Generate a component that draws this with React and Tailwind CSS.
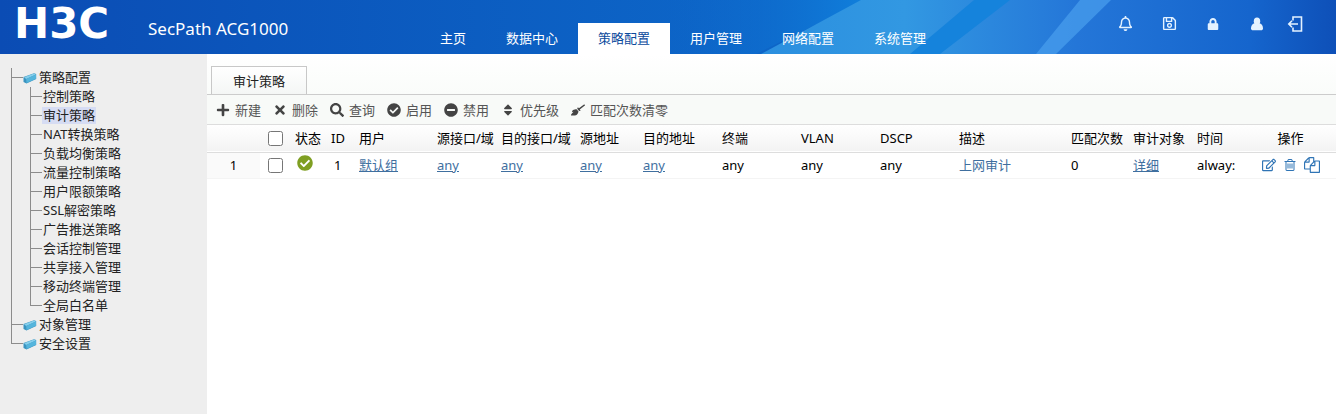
import React, { useState } from 'react';
import {
    FaPlus,
    FaTimes,
    FaSearch,
    FaCheckCircle,
    FaMinusCircle,
    FaSort,
    FaBroom,
    FaRegBell,
    FaRegSave,
    FaLock,
    FaRegEdit,
} from 'react-icons/fa';

const NAV = ['主页', '数据中心', '策略配置', '用户管理', '网络配置', '系统管理'];

const POLICY_ITEMS = [
    '控制策略',
    '审计策略',
    'NAT转换策略',
    '负载均衡策略',
    '流量控制策略',
    '用户限额策略',
    'SSL解密策略',
    '广告推送策略',
    '会话控制管理',
    '共享接入管理',
    '移动终端管理',
    '全局白名单',
];

const ACTIONS = [
    { label: '新建', icon: FaPlus },
    { label: '删除', icon: FaTimes },
    { label: '查询', icon: FaSearch },
    { label: '启用', icon: FaCheckCircle },
    { label: '禁用', icon: FaMinusCircle },
    { label: '优先级', icon: FaSort },
    { label: '匹配次数清零', icon: FaBroom },
];

const LINK = 'text-[#3f6f9f] underline';

const COLUMNS = [
    { key: 'user', label: '用户', width: 'w-[78px]', link: LINK },
    { key: 'srcIf', label: '源接口/域', width: 'w-[64px]', link: LINK },
    { key: 'dstIf', label: '目的接口/域', width: 'w-[79px]', link: LINK },
    { key: 'src', label: '源地址', width: 'w-[63px]', link: LINK },
    { key: 'dst', label: '目的地址', width: 'w-[79px]', link: LINK },
    { key: 'terminal', label: '终端', width: 'w-[79px]' },
    { key: 'vlan', label: 'VLAN', width: 'w-[79px]' },
    { key: 'dscp', label: 'DSCP', width: 'w-[79px]' },
    { key: 'desc', label: '描述', width: 'w-[112px]', link: 'text-[#3f6f9f]' },
    { key: 'hits', label: '匹配次数', width: 'w-[62px]' },
    { key: 'audit', label: '审计对象', width: 'w-[64px]', link: LINK },
    { key: 'time', label: '时间', width: 'w-[43px]' },
];

const POLICIES = [
    {
        id: 1,
        user: '默认组',
        srcIf: 'any',
        dstIf: 'any',
        src: 'any',
        dst: 'any',
        terminal: 'any',
        vlan: 'any',
        dscp: 'any',
        desc: '上网审计',
        hits: 0,
        audit: '详细',
        time: 'alway:',
    },
];

const UserIcon = () => (
    <svg viewBox="0 0 14 14" className="h-[14px] w-[14px]" fill="currentColor">
        <ellipse cx="7" cy="4.2" rx="3.2" ry="3.7" />
        <path d="M4.4 6.2C2 7 1 9 1 11.2 1 12.6 1.8 13.2 3 13.2h8c1.2 0 2-.6 2-2C13 9 12 7 9.6 6.2z" />
    </svg>
);

const LogoutIcon = () => (
    <svg viewBox="0 0 16 16" className="h-[16px] w-[16px]" fill="none" stroke="currentColor" strokeWidth="1.6">
        <path d="M6 4.5V1h8.5v14H6v-3.5" />
        <path d="M11 8H2M5 4.8L1.8 8 5 11.2" />
    </svg>
);

const TrashIcon = () => (
    <svg viewBox="0 0 1792 1792" className="h-4 w-[14px]" fill="currentColor">
        <path d="M704 736v576q0 14-9 23t-23 9h-64q-14 0-23-9t-9-23v-576q0-14 9-23t23-9h64q14 0 23 9t9 23zm256 0v576q0 14-9 23t-23 9h-64q-14 0-23-9t-9-23v-576q0-14 9-23t23-9h64q14 0 23 9t9 23zm256 0v576q0 14-9 23t-23 9h-64q-14 0-23-9t-9-23v-576q0-14 9-23t23-9h64q14 0 23 9t9 23zm128 724v-948h-896v948q0 22 7 40.500t14.500 27 10.500 8.500h832q3 0 10.500-8.500t14.500-27 7-40.500zm-672-1076h448l-48-117q-7-9-17-11h-317q-10 2-17 11zm928 32v64q0 14-9 23t-23 9h-96v948q0 83-47 143.500t-113 60.500h-832q-66 0-113-58.500t-47-141.500v-952h-96q-14 0-23-9t-9-23v-64q0-14 9-23t23-9h309l70-167q15-37 54-63t79-26h320q40 0 79 26t54 63l70 167h309q14 0 23 9t9 23z" />
    </svg>
);

const CopyIcon = () => (
    <svg viewBox="0 0 1792 1792" className="h-4 w-4" fill="currentColor">
        <path d="M1696 384q40 0 68 28t28 68v1216q0 40-28 68t-68 28h-960q-40 0-68-28t-28-68v-288h-544q-40 0-68-28t-28-68v-672q0-40 20-88t48-76l408-408q28-28 76-48t88-20h416q40 0 68 28t28 68v328q68-40 128-40h416zm-544 213l-299 299h299v-299zm-640-384l-299 299h299v-299zm196 647l316-316v-416h-384v416q0 40-28 68t-68 28h-416v640h512v-256q0-40 20-88t48-76zm956 804v-1152h-384v416q0 40-28 68t-68 28h-416v640h896z" />
    </svg>
);

// tilted book, spine at the bottom left
const BookIcon = () => (
    <svg viewBox="0 0 14 12" className="h-[12px] w-[14px]">
        <path d="M0.5 5L11 1.2 13.2 2v5L3.5 11.5 0.5 10z" fill="#3a93bf" />
        <path d="M1 5.2L11 1.5 13 2.5 3.2 7z" fill="#86cfec" />
        <path d="M3.2 7L13 2.5v4.2L3.5 11z" fill="#55b5dc" />
    </svg>
);

const HEADER_TOOLS = [
    { label: '消息', icon: <FaRegBell size={15} />, width: 'w-11' },
    { label: '保存', icon: <FaRegSave size={15} />, width: 'w-11' },
    { label: '锁定', icon: <FaLock size={12} />, width: 'w-11' },
    { label: '用户', icon: <UserIcon />, width: 'w-11' },
    { label: '退出', icon: <LogoutIcon />, width: 'w-8' },
];

const Branch = ({ last, width }) => (
    <span className={`flex h-full flex-col ${width}`}>
        <span className="h-[10px] border-b border-l border-[#8c8c8c]" />
        <span className={`flex-1 border-l ${last ? 'border-transparent' : 'border-[#8c8c8c]'}`} />
    </span>
);

const TreeFolder = ({ label, last }) => (
    <div className="flex h-[19px] items-center">
        <Branch last={last} width="w-[12px]" />
        <BookIcon />
        <a href="#" className="ml-[2px] leading-[17px]">{label}</a>
    </div>
);

const Sidebar = ({ selected, onSelect }) => (
    <aside className="w-[207px] shrink-0 bg-[#eeeeee] pt-[14px] pl-[11px] text-[#222]">
        <TreeFolder label="策略配置" />
        <ul>
            {POLICY_ITEMS.map((item, i) => (
                <li key={item} className="flex h-[19px] items-center">
                    <span className="h-full w-[19px] border-l border-[#8c8c8c]" />
                    <Branch last={i === POLICY_ITEMS.length - 1} width="w-[12px]" />
                    <a
                        href="#"
                        onClick={() => onSelect(item)}
                        className={`px-px leading-[17px] ${item === selected ? 'bg-[#d6dcf3]' : ''}`}
                    >
                        {item}
                    </a>
                </li>
            ))}
        </ul>
        <TreeFolder label="对象管理" />
        <TreeFolder label="安全设置" last />
    </aside>
);

const Header = () => (
    <header className="relative flex h-[54px] bg-linear-to-r from-[#0b4cb4] via-[#0d66c8] via-55% to-[#0f50b8] text-white">
        {/* light bands behind the menu */}
        <svg className="absolute top-0 right-0 h-full w-[680px]" viewBox="0 0 680 54" preserveAspectRatio="none">
            <defs>
                <linearGradient id="sky" x1="0" x2="1">
                    <stop offset="0" stopColor="#2b8fdf" />
                    <stop offset="0.25" stopColor="#3298e2" />
                    <stop offset="0.55" stopColor="#2476d8" />
                    <stop offset="0.85" stopColor="#1565cd" />
                    <stop offset="1" stopColor="#0e50b8" />
                </linearGradient>
                <linearGradient id="deep" x1="0" x2="1">
                    <stop offset="0" stopColor="#0d62c8" stopOpacity="0" />
                    <stop offset="1" stopColor="#1080dc" />
                </linearGradient>
            </defs>
            <path d="M0 0H210L100 54H0z" fill="url(#deep)" />
            <path d="M205 0H680V54H105z" fill="url(#sky)" />
            <path d="M318 0H354L284 54H254z" fill="#1583dc" />
            <path d="M424 0H455L400 54H380z" fill="#4a9fee" opacity="0.7" />
        </svg>
        <div className="relative flex w-[420px] shrink-0">
            <span className="ml-[14px] w-[134px] font-['DejaVu_Sans',sans-serif] text-[42px] leading-[48px] font-bold">H3C</span>
            <span className="text-[17px] leading-[58px]">SecPath ACG1000</span>
        </div>
        <nav className="relative flex items-end">
            {NAV.map((item) => (
                <a
                    key={item}
                    href="#"
                    className={`h-[31px] px-5 leading-[31px] whitespace-nowrap ${item === '策略配置' ? 'bg-white text-[#0b4a9c]' : ''}`}
                >
                    {item}
                </a>
            ))}
        </nav>
        <div className="relative mr-[25px] ml-auto flex h-[47px] items-center">
            {HEADER_TOOLS.map(({ label, icon, width }) => (
                <button key={label} aria-label={label} className={`flex justify-center text-[#e4f2ff] ${width}`}>
                    {icon}
                </button>
            ))}
        </div>
    </header>
);

const PolicyTable = () => (
    <table className="w-full table-fixed border-collapse text-left text-black">
        <thead>
            <tr className="h-[27px] border-b border-[#dddddd] bg-linear-to-b from-white to-[#f3f3f3]">
                <th className="w-[53px]" />
                <th className="w-[30px]">
                    <input type="checkbox" aria-label="全选" className="mx-auto block size-[15px]" />
                </th>
                <th className="w-[36px] px-[5px] font-normal whitespace-nowrap">状态</th>
                <th className="w-[28px] px-[5px] font-normal">ID</th>
                {COLUMNS.map((col) => (
                    <th key={col.key} className={`px-[5px] font-normal whitespace-nowrap ${col.width}`}>{col.label}</th>
                ))}
                <th className="pl-[10px] text-center font-normal">操作</th>
            </tr>
        </thead>
        <tbody>
            {POLICIES.map((row, i) => (
                <tr key={row.id} className="h-[26px] border-b border-[#f4f4f4]">
                    <td className="bg-[#fafafa] text-center">{i + 1}</td>
                    <td>
                        <input type="checkbox" aria-label={`选择 ${row.id}`} className="mx-auto block size-[15px]" />
                    </td>
                    <td className="px-[7px] pb-1">
                        <FaCheckCircle size={16} className="text-[#7f9f22]" />
                    </td>
                    <td className="px-2">{row.id}</td>
                    {COLUMNS.map((col) => (
                        <td key={col.key} className="pl-[5px] whitespace-nowrap">
                            {col.link ? <a href="#" className={col.link}>{row[col.key]}</a> : row[col.key]}
                        </td>
                    ))}
                    <td className="pl-[10px]">
                        <div className="flex items-center justify-center gap-[7px] text-[#2f74b5]">
                            <button aria-label="编辑"><FaRegEdit size={14} /></button>
                            <button aria-label="删除"><TrashIcon /></button>
                            <button aria-label="复制"><CopyIcon /></button>
                        </div>
                    </td>
                </tr>
            ))}
        </tbody>
    </table>
);

const App = () => {
    const [selected, setSelected] = useState('审计策略');

    return (
        <div className="flex min-h-screen flex-col bg-white font-['Noto_Sans','Noto_Sans_CJK_SC',sans-serif] text-[13px] leading-[18px]">
            <Header />
            <div className="flex flex-1">
                <Sidebar selected={selected} onSelect={setSelected} />
                <main className="min-w-0 flex-1">
                    <div className="flex border-b border-[#cccccc] bg-linear-to-b from-white to-[#fafcfa] pt-[12px] pl-[4px]">
                        <button className="h-[28px] w-[96px] border border-b-0 border-[#c8c8c8] bg-linear-to-b from-white to-[#f4f6f5] text-[#222]">
                            审计策略
                        </button>
                    </div>
                    <div className="flex h-[30px] items-center gap-3 border-b border-[#dddddd] bg-[#f8faf8] pl-[9px] text-[#555]">
                        {ACTIONS.map(({ label, icon: Icon }) => (
                            <button key={label} className="flex items-center gap-[5px] whitespace-nowrap">
                                <Icon size={14} className="text-[#444]" />
                                {label}
                            </button>
                        ))}
                    </div>
                    <PolicyTable />
                </main>
            </div>
        </div>
    );
};

export default App;
